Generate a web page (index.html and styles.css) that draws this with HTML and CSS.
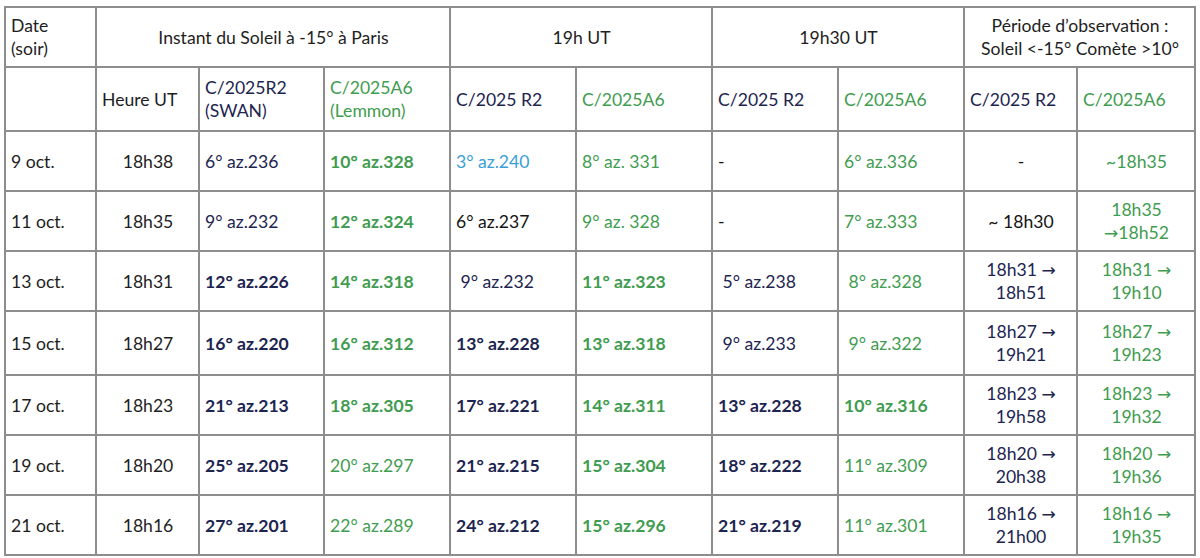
FILE: index.html
```html
<!DOCTYPE html>
<html lang="fr">
<head>
<meta charset="utf-8">
<title>Comètes C/2025 R2 et C/2025 A6</title>
<link rel="stylesheet" href="styles.css">
</head>
<body>
<table class="tbl">
  <colgroup>
    <col class="w-date"><col class="w-heure"><col class="w-a"><col class="w-b">
    <col class="w-c"><col class="w-d"><col class="w-e"><col class="w-f">
    <col class="w-g"><col class="w-h">
  </colgroup>
  <thead>
    <tr class="h1">
      <th class="top">Date<br>(soir)</th>
      <th colspan="3" class="ctr">Instant du Soleil à -15° à Paris</th>
      <th colspan="2" class="ctr">19h UT</th>
      <th colspan="2" class="ctr">19h30 UT</th>
      <th colspan="2" class="ctr">Période d’observation :<br>Soleil &lt;-15° Comète &gt;10°</th>
    </tr>
    <tr class="h2">
      <th></th>
      <th>Heure UT</th>
      <th class="navy">C/2025R2<br>(SWAN)</th>
      <th class="green">C/2025A6<br>(Lemmon)</th>
      <th class="navy">C/2025 R2</th>
      <th class="green">C/2025A6</th>
      <th class="navy">C/2025 R2</th>
      <th class="green">C/2025A6</th>
      <th class="navy">C/2025 R2</th>
      <th class="green">C/2025A6</th>
    </tr>
  </thead>
  <tbody>
    <tr>
      <td>9 oct.</td><td class="ctr">18h38</td>
      <td class="navy">6° az.236</td><td class="green b">10° az.328</td>
      <td class="blue">3° az.240</td><td class="green">8° az. 331</td>
      <td class="ink">-</td><td class="green">6° az.336</td>
      <td class="ctr ink">-</td><td class="ctr green">~18h35</td>
    </tr>
    <tr>
      <td>11 oct.</td><td class="ctr">18h35</td>
      <td class="navy">9° az.232</td><td class="green b">12° az.324</td>
      <td class="ink">6° az.237</td><td class="green">9° az. 328</td>
      <td class="ink">-</td><td class="green">7° az.333</td>
      <td class="ctr ink">~ 18h30</td><td class="ctr green">18h35<br><span class="arr">→</span>18h52</td>
    </tr>
    <tr>
      <td>13 oct.</td><td class="ctr">18h31</td>
      <td class="navy b">12° az.226</td><td class="green b">14° az.318</td>
      <td class="navy">&nbsp;9° az.232</td><td class="green b">11° az.323</td>
      <td class="navy">&nbsp;5° az.238</td><td class="green">&nbsp;8° az.328</td>
      <td class="ctr navy">18h31 <span class="arr">→</span><br>18h51</td><td class="ctr green">18h31 <span class="arr">→</span><br>19h10</td>
    </tr>
    <tr class="tall">
      <td>15 oct.</td><td class="ctr">18h27</td>
      <td class="navy b">16° az.220</td><td class="green b">16° az.312</td>
      <td class="navy b">13° az.228</td><td class="green b">13° az.318</td>
      <td class="navy">&nbsp;9° az.233</td><td class="green">&nbsp;9° az.322</td>
      <td class="ctr navy">18h27 <span class="arr">→</span><br>19h21</td><td class="ctr green">18h27 <span class="arr">→</span><br>19h23</td>
    </tr>
    <tr>
      <td>17 oct.</td><td class="ctr">18h23</td>
      <td class="navy b">21° az.213</td><td class="green b">18° az.305</td>
      <td class="navy b">17° az.221</td><td class="green b">14° az.311</td>
      <td class="navy b">13° az.228</td><td class="green b">10° az.316</td>
      <td class="ctr navy">18h23 <span class="arr">→</span><br>19h58</td><td class="ctr green">18h23 <span class="arr">→</span><br>19h32</td>
    </tr>
    <tr>
      <td>19 oct.</td><td class="ctr">18h20</td>
      <td class="navy b">25° az.205</td><td class="green">20° az.297</td>
      <td class="navy b">21° az.215</td><td class="green b">15° az.304</td>
      <td class="navy b">18° az.222</td><td class="green">11° az.309</td>
      <td class="ctr navy">18h20 <span class="arr">→</span><br>20h38</td><td class="ctr green">18h20 <span class="arr">→</span><br>19h36</td>
    </tr>
    <tr>
      <td>21 oct.</td><td class="ctr">18h16</td>
      <td class="navy b">27° az.201</td><td class="green">22° az.289</td>
      <td class="navy b">24° az.212</td><td class="green b">15° az.296</td>
      <td class="navy b">21° az.219</td><td class="green">11° az.301</td>
      <td class="ctr navy">18h16 <span class="arr">→</span><br>21h00</td><td class="ctr green">18h16 <span class="arr">→</span><br>19h35</td>
    </tr>
  </tbody>
</table>
</body>
</html>
```

FILE: styles.css
```css
html, body {
  margin: 0;
  background: #ffffff;
}
body {
  padding: 6px 4px 0 4px;
  font-family: Lato, "Open Sans", "Liberation Sans", sans-serif;
  font-size: 17.6px;
  line-height: 23px;
  color: #1e1e1e;
}
.tbl {
  border-collapse: collapse;
  table-layout: fixed;
  width: 1192px;
}
.w-date { width: 91px; }
.w-heure { width: 103px; }
.w-a { width: 125px; }
.w-b { width: 126px; }
.w-c { width: 126px; }
.w-d { width: 136px; }
.w-e { width: 126px; }
.w-f { width: 126px; }
.w-g { width: 113px; }
.w-h { width: 118px; }

.tbl th, .tbl td {
  border: 2px solid #8d8d8d;
  padding: 0 4px 0 5px;
  text-align: left;
  vertical-align: middle;
  font-weight: 400;
  white-space: nowrap;
  overflow: hidden;
}
.h1 th { height: 52px; }
.h2 th { height: 62px; }
.tbl tbody td { height: 58px; }
.tbl tbody tr.tall td { height: 62px; }

.tbl .h1 th.top {
  vertical-align: top;
  padding-top: 6px;
}
.ctr, .tbl th.ctr, .tbl td.ctr { text-align: center; }

.arr {
  font-family: "DejaVu Sans", sans-serif;
  font-size: 17px;
  line-height: 1;
}

.navy { color: #1d2450; }
.green { color: #3f9c50; }
.blue { color: #3aa0d4; }
.ink { color: #141414; }
.b { font-weight: 700; }
.tbl td.b { font-weight: 700; }
```
